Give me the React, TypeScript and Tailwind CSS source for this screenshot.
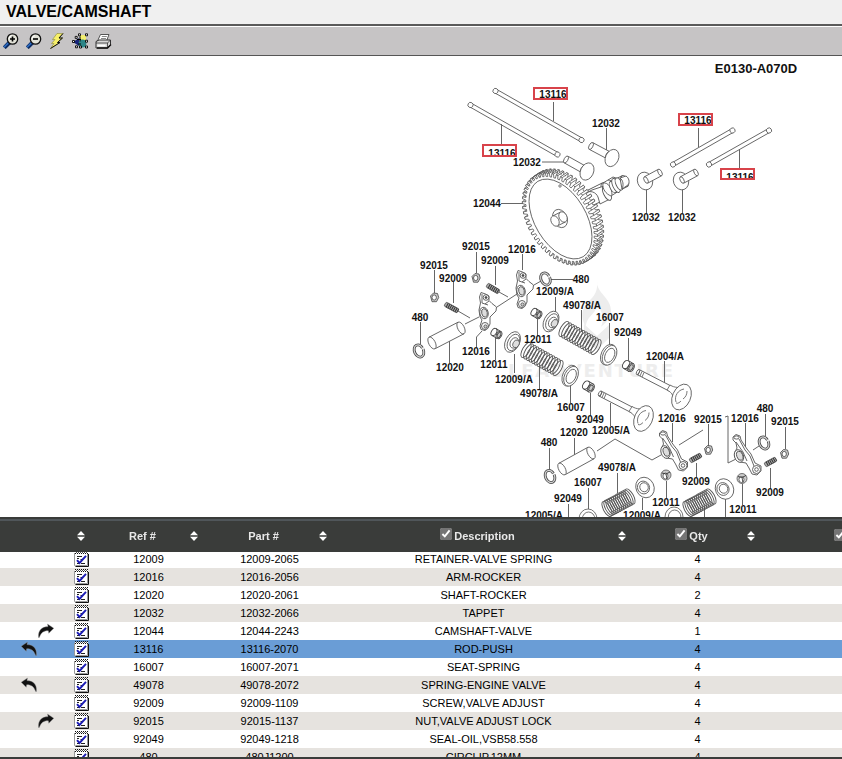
import type { ReactNode } from 'react';

type Arrow = 'next' | 'prev';

type Part = {
  ref: string;
  part: string;
  description: string;
  qty: number;
  arrow?: Arrow;
};

const parts: Part[] = [
  { ref: '12009', part: '12009-2065', description: 'RETAINER-VALVE SPRING', qty: 4 },
  { ref: '12016', part: '12016-2056', description: 'ARM-ROCKER', qty: 4 },
  { ref: '12020', part: '12020-2061', description: 'SHAFT-ROCKER', qty: 2 },
  { ref: '12032', part: '12032-2066', description: 'TAPPET', qty: 4 },
  { ref: '12044', part: '12044-2243', description: 'CAMSHAFT-VALVE', qty: 1, arrow: 'next' },
  { ref: '13116', part: '13116-2070', description: 'ROD-PUSH', qty: 4, arrow: 'prev' },
  { ref: '16007', part: '16007-2071', description: 'SEAT-SPRING', qty: 4 },
  { ref: '49078', part: '49078-2072', description: 'SPRING-ENGINE VALVE', qty: 4, arrow: 'prev' },
  { ref: '92009', part: '92009-1109', description: 'SCREW,VALVE ADJUST', qty: 4 },
  { ref: '92015', part: '92015-1137', description: 'NUT,VALVE ADJUST LOCK', qty: 4, arrow: 'next' },
  { ref: '92049', part: '92049-1218', description: 'SEAL-OIL,VSB58.558', qty: 4 },
  { ref: '480', part: '480J1200', description: 'CIRCLIP,12MM', qty: 4 },
];

const selectedRef = '13116';

/* ---------- toolbar icons ---------- */

function Magnifier({ plus = false }: { plus?: boolean }) {
  return (
    <svg width="16" height="16" viewBox="0 0 16 16" aria-hidden="true">
      <path d="M6.5 9.5 1.3 14.700" stroke="#0b2a63" strokeWidth="4" />
      <path d="M5.5 9.8 1 14.200" stroke="#2f6fc4" strokeWidth="1.6" />
      <circle cx="9.5" cy="6" r="5.2" fill="#e2e2d8" stroke="#111" strokeWidth="1.3" />
      <path d="M6 5.6a3.6 3.6 0 0 1 3-3" stroke="#fff" fill="none" />
      <path d={plus ? 'M7 6h5M9.5 3.5v5' : 'M7 6h5'} stroke="#000" strokeWidth="1.6" />
    </svg>
  );
}

function Bolt() {
  return (
    <svg width="16" height="16" viewBox="0 0 16 16" aria-hidden="true">
      <path d="M8 .5h6L10 5h3.500L8.500 9.500H11L1.500 15.500 5 10.500H2.500L6 6.500H3.500z" fill="#f7f06a" stroke="#8c8a3a" strokeWidth=".6" />
      <path d="M14 .5 10 5h3.500L8.500 9.500H11L1.500 15.500" fill="none" stroke="#111" />
    </svg>
  );
}

function SelectShapes() {
  return (
    <svg width="16" height="16" viewBox="0 0 16 16" aria-hidden="true">
      <path d="M8 2h6v6H8z" fill="#f3ee6f" />
      <path d="m1 9 6-4v8z" fill="#16237a" />
      <circle cx="10.5" cy="10.5" r="3.9" fill="#2c8587" />
      <g fill="#fff" stroke="#000" strokeWidth=".9">
        <path d="M6.5.8h2v2h-2zM13.5.8h2v2h-2zM3.2 3.4h2v2h-2zM.5 7.5h2v2h-2zM13.5 7.2h2v2h-2zM3.5 12.8h2v2h-2zM7.5 13h2v2h-2zM13.5 13h2v2h-2z" />
      </g>
      <path d="M5 6.5h4M8 3.5v5M6 11h3" stroke="#000" />
    </svg>
  );
}

function Printer() {
  return (
    <svg width="17" height="16" viewBox="0 0 17 16" aria-hidden="true">
      <path d="M5.5 1.5h8.5L11.5 8h-9z" fill="#fff" stroke="#555" />
      <path d="M6.8 3.5h5M6 5.5h5" stroke="#888" />
      <path d="M1 8.5 4 7h11.5v4.5L12.5 15H1z" fill="#d8d8d8" stroke="#333" />
      <path d="M1 10h11.5L15.5 7M12.5 10v5" fill="none" stroke="#333" strokeWidth=".8" />
      <path d="M2.5 12.5h8" stroke="#fff" strokeWidth="1.6" />
      <path d="M2 15h10.500L16 11.500" fill="none" stroke="#111" strokeWidth="1.400" />
    </svg>
  );
}

function SortIcon() {
  return (
    <svg width="8" height="10" viewBox="0 0 8 10" aria-hidden="true" fill="#fff">
      <path d="M4 0 8 4.200H0zM4 10 0 5.800h8z" />
    </svg>
  );
}

function NoteIcon() {
  return (
    <svg width="15" height="16" viewBox="0 0 15 16" className="block" aria-hidden="true">
      <path d="M1 1h13v14H1z" fill="#fff" />
      <path d="M.5 2v12.500l1 .5" fill="none" stroke="#999" />
      <path d="M13.500 2v12.500H1.500" fill="none" stroke="#9a9a9a" />
      <path d="M14.500 3v12.500H1.500" fill="none" stroke="#111" />
      <path d="M1 .5h13M1 2.500h13" stroke="#111" strokeDasharray="1 1" />
      <path d="M2 1.500h12" stroke="#555" strokeDasharray="1 1" />
      <path d="M3 5.500h5M3 7.500h2M6.500 8.500h2M3 12.500h2M7 12.500h4" stroke="#222" />
      <path d="M3 9.200 5.500 12 12 4.800" fill="none" stroke="#1b1bb4" strokeWidth="1.900" />
    </svg>
  );
}

function TurnArrow({ dir }: { dir: Arrow }) {
  return (
    <svg width="16" height="16" viewBox="0 0 16 16" className={dir === 'prev' ? 'ml-[21px] -scale-x-100' : 'ml-[38px]'} aria-hidden="true">
      <path d="M.5 14.500C0 7.500 3.500 3.800 10 3.600L9.500 1l6.300 4.300-5 5-.5-2.600C6 7.500 3 9.500 1.300 14.500z" fill="#111" stroke="#999" strokeWidth=".4" />
    </svg>
  );
}

/* ---------- exploded drawing ---------- */

type Span = { from: [number, number]; to: [number, number] };

// Draws its children along a horizontal axis and turns that axis to run from -> to.
function Along({ from, to, children }: Span & { children: (length: number) => ReactNode }) {
  const dx = to[0] - from[0];
  const dy = to[1] - from[1];
  const angle = (Math.atan2(dy, dx) * 180) / Math.PI;
  return <g transform={`translate(${from[0]} ${from[1]}) rotate(${angle})`}>{children(Math.hypot(dx, dy))}</g>;
}

function Tube({ from, to, r, squash = 0.5 }: Span & { r: number; squash?: number }) {
  const rx = r * squash;
  return (
    <Along from={from} to={to}>
      {(n) => (
        <>
          <path d={`M0 ${-r}H${n}A${rx} ${r} 0 0 1 ${n} ${r}H0z`} />
          <ellipse rx={rx} ry={r} />
          <path d={`M${n} ${-r}A${rx} ${r} 0 0 0 ${n} ${r}`} fill="none" />
        </>
      )}
    </Along>
  );
}

function Rod({ from, to }: Span) {
  return (
    <Along from={from} to={to}>
      {(n) => (
        <>
          <path d={`M0 -2H${n}M0 2H${n}`} />
          <circle r="2.600" />
          <circle cx={n} r="2.600" />
        </>
      )}
    </Along>
  );
}

function Spring({ from, to }: Span) {
  return (
    <Along from={from} to={to}>
      {(n) =>
        Array.from({ length: 13 }, (_, i) => (
          <ellipse key={i} cx={(n * i) / 12} rx="3.500" ry="8.500" fill={i === 0 ? '#fff' : 'none'} strokeWidth=".9" />
        ))
      }
    </Along>
  );
}

function Screw({ from, to }: Span) {
  return (
    <Along from={from} to={to}>
      {(n) => (
        <>
          <rect x="0" y="-2.300" width={n} height="4.600" rx="1.500" fill="#aaa" />
          <path d={`M2 0H${n}`} stroke="#333" strokeWidth="4.600" strokeDasharray="1 1" />
        </>
      )}
    </Along>
  );
}

function Disc({ x, y, rx, ry, turn = 25, hole }: { x: number; y: number; rx: number; ry: number; turn?: number; hole?: number }) {
  return (
    <g transform={`translate(${x} ${y}) rotate(${turn})`}>
      <ellipse rx={rx} ry={ry} />
      {hole && <ellipse cx=".6" rx={rx * hole} ry={ry * hole} />}
    </g>
  );
}

function Seat({ x, y }: { x: number; y: number }) {
  return (
    <g transform={`translate(${x} ${y}) rotate(25)`}>
      <ellipse cx="-.8" rx="7" ry="11" />
      <ellipse cx=".6" rx="6.500" ry="10.500" />
      <ellipse cx=".8" rx="4.500" ry="7.500" />
    </g>
  );
}

function Retainer({ x, y }: { x: number; y: number }) {
  return (
    <g transform={`translate(${x} ${y}) rotate(27)`}>
      <ellipse rx="7" ry="11" />
      <ellipse cx="1" rx="5.500" ry="8.800" />
      <ellipse cx="2" rx="4" ry="5.500" />
      <ellipse cx="4" rx="3" ry="4" fill="#ddd" />
    </g>
  );
}

function Circlip({ x, y }: { x: number; y: number }) {
  return (
    <g transform={`translate(${x} ${y}) rotate(-25)`} fill="none">
      <ellipse rx="4.500" ry="6.300" stroke="#444" strokeWidth="2.800" strokeDasharray="32 2" />
      <ellipse rx="4.500" ry="6.300" stroke="#d6d6d6" strokeWidth="1.200" strokeDasharray="32 2" />
    </g>
  );
}

function Nut({ x, y }: { x: number; y: number }) {
  return (
    <g transform={`translate(${x} ${y})`}>
      <path d="M-4 -1.500 -1 -4.500 3 -4 4.200 0 2 4.200 -2.500 4.200z" fill="#ccc" stroke="#444" />
      <ellipse cx="-.3" rx="2.200" ry="2.600" stroke="#444" />
    </g>
  );
}

function Keeper({ x, y }: { x: number; y: number }) {
  return (
    <g transform={`translate(${x} ${y})`}>
      <circle r="5" fill="#ccc" />
      <ellipse cx="-.5" cy="1" rx="2.500" ry="3" />
      <path d="M-4 -2 0 -1 4 -3M0 -1 1 4" stroke="#222" fill="none" />
    </g>
  );
}

function Bushing({ from, to, r }: Span & { r: number }) {
  return (
    <g stroke="#444" strokeWidth=".9">
      <Tube from={to} to={from} r={r} squash={0.65} />
      <g transform={`translate(${to[0]} ${to[1]}) rotate(30)`}>
        <ellipse rx={r * 0.4} ry={r * 0.7} fill="#ccc" />
      </g>
    </g>
  );
}

function Valve({ x, y }: { x: number; y: number }) {
  return (
    <g transform={`translate(${x} ${y})`}>
      <Tube from={[0, 0]} to={[33, 17]} r={2.7} />
      <path d="M2 -1.500 0 3M4 -.500 2 4M6 .500 4 5" />
      <path d="M29 18C35 21 36 25 35 31L49 14C41 16 37 16 32 13z" />
      <ellipse cx="43.500" cy="25" rx="9" ry="13.500" transform="rotate(24 43.500 25)" />
      <path d="M38 30C36 24 40 18 46 17M45 27C48 25 49 22 49 19M38 31C40 32 42 30 43 29" fill="none" />
    </g>
  );
}

function UpperRocker({ x, y }: { x: number; y: number }) {
  return (
    <g transform={`translate(${x} ${y})`} strokeWidth=".9">
      <path d="M-3 -20.500 1.500 -19 5 -17 5 -12.500 8 -9.500 12.500 -6 12 -2 6 4 6 11 4 15 1 17.500 -3 16.500 -4 13 -2 7 -4 4 -5 -3 -3.500 -10 -4.500 -16z" />
      <ellipse rx="4.200" ry="5.800" transform="rotate(-12)" />
      <ellipse cx=".5" rx="2.800" ry="4.300" transform="rotate(-12)" fill="#ddd" />
      <circle cx="1" cy="13" r="3.500" />
      <circle cx="1.500" cy="13.500" r="1.600" fill="#ccc" />
      <circle cx="2" cy="-15.500" r="2.800" />
      <circle cx="2" cy="-15.500" r="1" fill="#333" />
      <path d="M-2 -19V-10L4 -8M5 -12 1 -9" fill="none" />
    </g>
  );
}

function LowerRocker({ x, y }: { x: number; y: number }) {
  return (
    <g transform={`translate(${x} ${y})`} strokeWidth=".9">
      <path d="M-6 -19 -3 -21.500 1 -20 2 -16 8 -7 12 -2 16 7 22 10 22 15 18 19 13 18 10 12 7 7 1 6 -4 2 -4 -4 -2 -8 -3 -13 -6 -16z" />
      <path d="M0 -17 6 -6 11 0 15 10M-3 -14 4 -4 8 5" fill="none" />
      <ellipse rx="4.500" ry="6.500" transform="rotate(-18)" />
      <ellipse cx=".8" rx="3" ry="4.700" transform="rotate(-18)" fill="#ddd" />
      <circle cx="17.500" cy="13.500" r="4" />
      <circle cx="17.500" cy="13.500" r="1.800" />
      <ellipse cx="-2.500" cy="-18.500" rx="2.500" ry="1.600" />
    </g>
  );
}

const TEETH = 54;
const TILT = (-31 * Math.PI) / 180;

function rim(t: number, grow: number): [number, number] {
  const px = (28 + grow) * Math.cos(t);
  const py = (46 + grow) * Math.sin(t);
  return [560 + px * Math.cos(TILT) - py * Math.sin(TILT), 219 + px * Math.sin(TILT) + py * Math.cos(TILT)];
}

function Gear() {
  const step = (Math.PI * 2) / TEETH;
  const teeth = Array.from({ length: TEETH }, (_, i) => {
    const t = i * step;
    return [rim(t, 0.5), rim(t + step * 0.1, 4), rim(t + step * 0.5, 4), rim(t + step * 0.6, 0.5)];
  });
  const back = ([px, py]: [number, number]) => `${px + 6} ${py - 4}`;
  const faces = teeth.map((q) => q.map((p) => p.join(' ')).join('L')).join('L');
  return (
    <g strokeWidth=".8" stroke="#555">
      <path d={`M${teeth.map((q) => q.map(back).join('L')).join('L')}z`} />
      {teeth.map(([, b, c], i) => (
        <path key={i} d={`M${b.join(' ')}L${back(b)}L${back(c)}L${c.join(' ')}z`} />
      ))}
      <path d={`M${faces}z`} />
      <ellipse cx="560.500" cy="219" rx="25.500" ry="44" transform="rotate(-31 560.500 219)" />
      <circle cx="560" cy="186" r="1.200" />
      <ellipse cx="560" cy="218.500" rx="7" ry="9.500" transform="rotate(-25 560 218.500)" />
      <Tube from={[555, 221]} to={[563, 217]} r={5.5} squash={0.7} />
    </g>
  );
}

function Camshaft() {
  return (
    <g strokeWidth=".9">
      <Tube from={[582, 202]} to={[606, 190]} r={8} />
      <path d="M586 193C590 190 596 192 598 197L600 204 610 199 609 189 604 186 592 190z" />
      <ellipse cx="607" cy="193" rx="3.500" ry="8" transform="rotate(-25 607 193)" />
      <path d="M603 183 613 177 619 179 622 189 611 196C606 194 602 189 603 183z" />
      <path d="M603 183C608 182 612 188 612 195M608 180C613 180 616 186 616 192" fill="none" />
      <Tube from={[613, 187]} to={[625, 181]} r={6} />
      <ellipse cx="616" cy="185.500" rx="3.200" ry="7.500" transform="rotate(-25 616 185.500)" />
      <ellipse cx="619" cy="184" rx="3" ry="6.500" transform="rotate(-25 619 184)" />
      <path d="M620 178 626 176C629 178 630 182 628 185L622 189z" />
      <path d="M620 178C623 180 624 185 622 189" fill="none" />
    </g>
  );
}

const leaders = [
  'M553.500 99V121M501.500 124V145M606.500 128V150M542 162H564M698.500 125V147M739.500 149V169',
  'M646.500 190V213M682.500 190V213M501 203.500H523M476.500 252V273M495.500 266V285M522.500 254V270',
  'M551 279.500H573M434.500 270V293M453.500 282V303M420.500 322V344M449.500 341V363M476.500 347V337L482 331',
  'M495.500 338V360M537.500 318V336M555.500 297V312M581.500 310V332M514.500 354V373M539.500 366V389',
  'M609.500 323V345M628.500 338V360M664.500 361V384M570.500 385V403M590.500 393V415M610.500 403V426',
  'M574.500 438V457M549.500 448V469M672.500 423V442M708.500 424V446M745.500 423V447M765.500 414V436',
  'M785.500 427V449M696.500 463V477M770.500 468V488M666.500 481V498M742.500 484V505M617.500 473V493',
  'M588.500 488V509M568.500 504V517M642.500 498V510M704.500 508V517M725.500 499V517',
  'M465 324 479 317M497 307 517 294M534 285 541 281M458 311 470 318M499 292 508 297',
  'M597 451 615 439 652 460 661 455M679 445 703 430M725 417 728 416V463L736 459M753 450 759 446',
];

type Callout = [text: string, x: number, y: number];

const callouts: Callout[] = [
  ['12032', 606, 127], ['12032', 527, 166], ['12032', 646, 221], ['12032', 682, 221],
  ['12044', 487, 207], ['92015', 476, 250], ['12016', 522, 253], ['92009', 495, 264],
  ['92015', 434, 269], ['92009', 453, 282], ['480', 420, 321], ['480', 581, 283],
  ['12009/A', 555, 295], ['49078/A', 582, 309], ['12011', 538, 343], ['12016', 476, 355],
  ['12020', 450, 371], ['12011', 494, 368], ['12009/A', 514, 383], ['49078/A', 539, 397],
  ['16007', 610, 321], ['92049', 628, 336], ['12004/A', 665, 360], ['16007', 571, 411],
  ['92049', 590, 423], ['12005/A', 611, 434], ['12020', 574, 436], ['12016', 672, 422],
  ['92015', 708, 423], ['480', 549, 446], ['49078/A', 617, 471], ['16007', 588, 486],
  ['92049', 568, 502], ['12005/A', 544, 519], ['12009/A', 642, 519], ['12011', 666, 506],
  ['480', 765, 412], ['12016', 745, 422], ['92015', 785, 425], ['92009', 696, 485],
  ['92009', 770, 496], ['12011', 743, 513],
];

// Highlighted callouts: box position, and the baseline of the number inside
const highlights = [
  { x: 534, y: 88, h: 11, baseline: 98 },
  { x: 483, y: 145, h: 11, baseline: 157 },
  { x: 679, y: 114, h: 11, baseline: 124 },
  { x: 721, y: 169, h: 10, baseline: 181 },
];

function Diagram() {
  return (
    <svg width="842" height="461" viewBox="0 56 842 461" className="block shrink-0" role="img" aria-label="Valve and camshaft exploded view">
      <g fill="#ededed">
        <path d="M597 281C596 293 612 298 611 312 610 320 604 324 601 327 605 318 602 310 596 305 597 314 586 316 586 327 579 315 583 307 589 301 595 296 598 290 597 281z" />
        <path d="M584 324 597 336 610 324V337L597 350 584 337z" />
        <text x="508" y="377" className="font-['DejaVu_Sans',sans-serif] text-[18px] font-bold tracking-widest">LEADVENTURE</text>
      </g>

      <g fill="#fff" stroke="#555" strokeWidth=".8">
        <Rod from={[495.5, 91]} to={[581.5, 140]} />
        <Rod from={[470.5, 105]} to={[557.5, 154.5]} />
        <Rod from={[673, 164.5]} to={[732.5, 130.5]} />
        <Rod from={[709, 164.5]} to={[769, 130.5]} />

        <Tube from={[591, 146]} to={[608, 155]} r={3.8} />
        <Disc x={612} y={158} rx={6.5} ry={9} />
        <Tube from={[566, 159.5]} to={[583, 169]} r={3.8} />
        <Disc x={587} y={171.500} rx={6.5} ry={9} />
        <Disc x={645} y={181} rx={7.5} ry={9} turn={-20} />
        <Tube from={[660, 172.5]} to={[646, 180]} r={3.6} />
        <Disc x={681} y={181} rx={7.5} ry={9} turn={-20} />
        <Tube from={[696, 172.5]} to={[682, 180]} r={3.6} />

        <Camshaft />
        <Gear />

        <path d={leaders.join('')} fill="none" stroke="#666" strokeWidth="1" />

        <Nut x={434.500} y={297.500} />
        <Nut x={476} y={278} />
        <Nut x={708.500} y={450} />
        <Nut x={784.500} y={454} />
        <Screw from={[445, 304]} to={[458, 311]} />
        <Screw from={[487, 285]} to={[499, 292]} />
        <Screw from={[690, 461]} to={[701, 455]} />
        <Screw from={[765, 465]} to={[776, 459]} />
        <Circlip x={419} y={351} />
        <Circlip x={545.500} y={279} />
        <Circlip x={550} y={476.500} />
        <Circlip x={764} y={443} />

        <Tube from={[432, 343]} to={[461, 328]} r={6.5} />
        <Tube from={[562, 469]} to={[591, 453]} r={6.5} />
        <UpperRocker x={484} y={313} />
        <UpperRocker x={521} y={291} />
        <LowerRocker x={665.500} y={452} />
        <LowerRocker x={739} y={456} />

        <Bushing from={[534, 312]} to={[539, 315]} r={4} />
        <Bushing from={[494, 332]} to={[499, 335]} r={4} />
        <Retainer x={551} y={321.500} />
        <Retainer x={512.500} y={342} />
        <Spring from={[564, 329]} to={[596, 347]} />
        <Spring from={[526, 350]} to={[558, 368]} />
        <Seat x={609} y={355} />
        <Seat x={570.500} y={376} />
        <Bushing from={[626, 364.5]} to={[631, 367.5]} r={4.5} />
        <Bushing from={[586, 385]} to={[591, 388]} r={4.5} />
        <Valve x={638} y={372} />
        <Valve x={600} y={393.500} />

        <Disc x={645} y={487.500} rx={9} ry={10.5} turn={-25} />
        <Disc x={643.500} y={487.500} rx={6} ry={6.5} turn={-25} hole={0.7} />
        <Disc x={724.500} y={489} rx={9} ry={10.5} turn={-25} />
        <Disc x={723} y={489} rx={6} ry={6.5} turn={-25} hole={0.7} />
        <Spring from={[607, 509]} to={[630, 496.5]} />
        <Spring from={[688, 509]} to={[711, 496.5]} />
        <Disc x={588} y={519} rx={9} ry={10} turn={0} hole={0.7} />
        <Disc x={674} y={517} rx={9} ry={10} turn={0} hole={0.7} />
        <Keeper x={666} y={475} />
        <Keeper x={742} y={478.500} />
      </g>

      <g className="font-['Liberation_Sans',sans-serif] text-[10px] font-bold" textAnchor="middle" fill="#111">
        {highlights.map(({ x, y, h, baseline }) => (
          <g key={x}>
            <text x={x + 19} y={baseline}>13116</text>
            <path d={`M${x - 1} ${y + h}h36v3h-36z`} fill="#fff" />
            <rect x={x} y={y} width="33" height={h} fill="none" stroke="#d8434a" strokeWidth="2" />
          </g>
        ))}
        {callouts.map(([text, x, y]) => (
          <text key={`${text}-${x}-${y}`} x={x} y={y}>{text}</text>
        ))}
        <text x="756" y="73" className="text-[13px]">E0130-A070D</text>
      </g>
    </svg>
  );
}

/* ---------- parts list ---------- */

function HeaderCell({ label, checkbox = false }: { label?: string; checkbox?: boolean }) {
  return (
    <th className="h-[29px] p-0 align-middle">
      <div className="flex items-center pl-1.5 pr-1 pt-px">
        <span className="flex flex-1 items-center justify-center">
          {checkbox ? (
            <label className="flex items-center gap-0.5">
              <input type="checkbox" defaultChecked className="mb-1 size-3 accent-[#757575]" />
              {label}
            </label>
          ) : (
            label
          )}
        </span>
        <button type="button" aria-label={`Sort by ${label ?? 'notes'}`}>
          <SortIcon />
        </button>
      </div>
    </th>
  );
}

function PartsTable() {
  return (
    <table className="w-full table-fixed border-collapse text-center text-[11px] leading-[18px] text-black">
      <colgroup>
        <col className="w-[89px]" />
        <col className="w-[113px]" />
        <col className="w-[129px]" />
        <col />
        <col className="w-[129px]" />
        <col className="w-[83px]" />
      </colgroup>
      <thead className="sticky top-0 z-10 bg-[#3a3c3a] text-[#e8e8e8] shadow-[0_2px_0_#3a3c3a]">
        <tr>
          <HeaderCell />
          <HeaderCell label="Ref #" />
          <HeaderCell label="Part #" />
          <HeaderCell label="Description" checkbox />
          <HeaderCell label="Qty" checkbox />
          <th className="overflow-hidden p-0">
            <div className="flex pl-[75px]">
              <input type="checkbox" defaultChecked aria-label="Show column" className="mb-0.5 size-3 shrink-0 accent-[#757575]" />
            </div>
          </th>
        </tr>
      </thead>
      <tbody>
        {parts.map((p) => (
          <tr key={p.ref} className={p.ref === selectedRef ? 'h-[18px] bg-[#6a9dd6]' : 'h-[18px] even:bg-[#e6e3df]'}>
            <td className="p-0">
              <div className="flex items-center justify-between">
                <span>{p.arrow && <TurnArrow dir={p.arrow} />}</span>
                <button type="button" aria-label={`Notes for ${p.ref}`}>
                  <NoteIcon />
                </button>
              </div>
            </td>
            <td className="p-0 pl-1.5">{p.ref}</td>
            <td className="p-0 pl-1.5">{p.part}</td>
            <td className="p-0 pl-1.5">{p.description}</td>
            <td className="p-0 pl-1.5">{p.qty}</td>
            <td className="p-0" />
          </tr>
        ))}
      </tbody>
    </table>
  );
}

export default function App() {
  return (
    <div className="flex h-screen flex-col overflow-hidden bg-white font-['Liberation_Sans',Arial,sans-serif]">
      <header className="border-b-2 border-[#5a5a5a] bg-[#f0f0f0] px-1.5">
        <h1 className="text-base font-bold leading-6 text-black">VALVE/CAMSHAFT</h1>
      </header>

      <div className="flex h-[30px] shrink-0 items-center gap-[7px] border-b border-t border-b-[#555] border-t-white bg-[#c6c4c5] px-[3px]">
        <button type="button" aria-label="Zoom in"><Magnifier plus /></button>
        <button type="button" aria-label="Zoom out"><Magnifier /></button>
        <button type="button" aria-label="Hotspots"><Bolt /></button>
        <button type="button" aria-label="Select parts"><SelectShapes /></button>
        <button type="button" aria-label="Print"><Printer /></button>
      </div>

      <main className="flex min-h-0 flex-1 overflow-hidden">
        <Diagram />
      </main>

      <section className="h-[242px] shrink-0 border-b-2 border-t-2 border-[#3a3c3a]">
        <div className="h-full overflow-hidden border-t-2 border-[#50565a]">
          <PartsTable />
        </div>
      </section>
    </div>
  );
}
